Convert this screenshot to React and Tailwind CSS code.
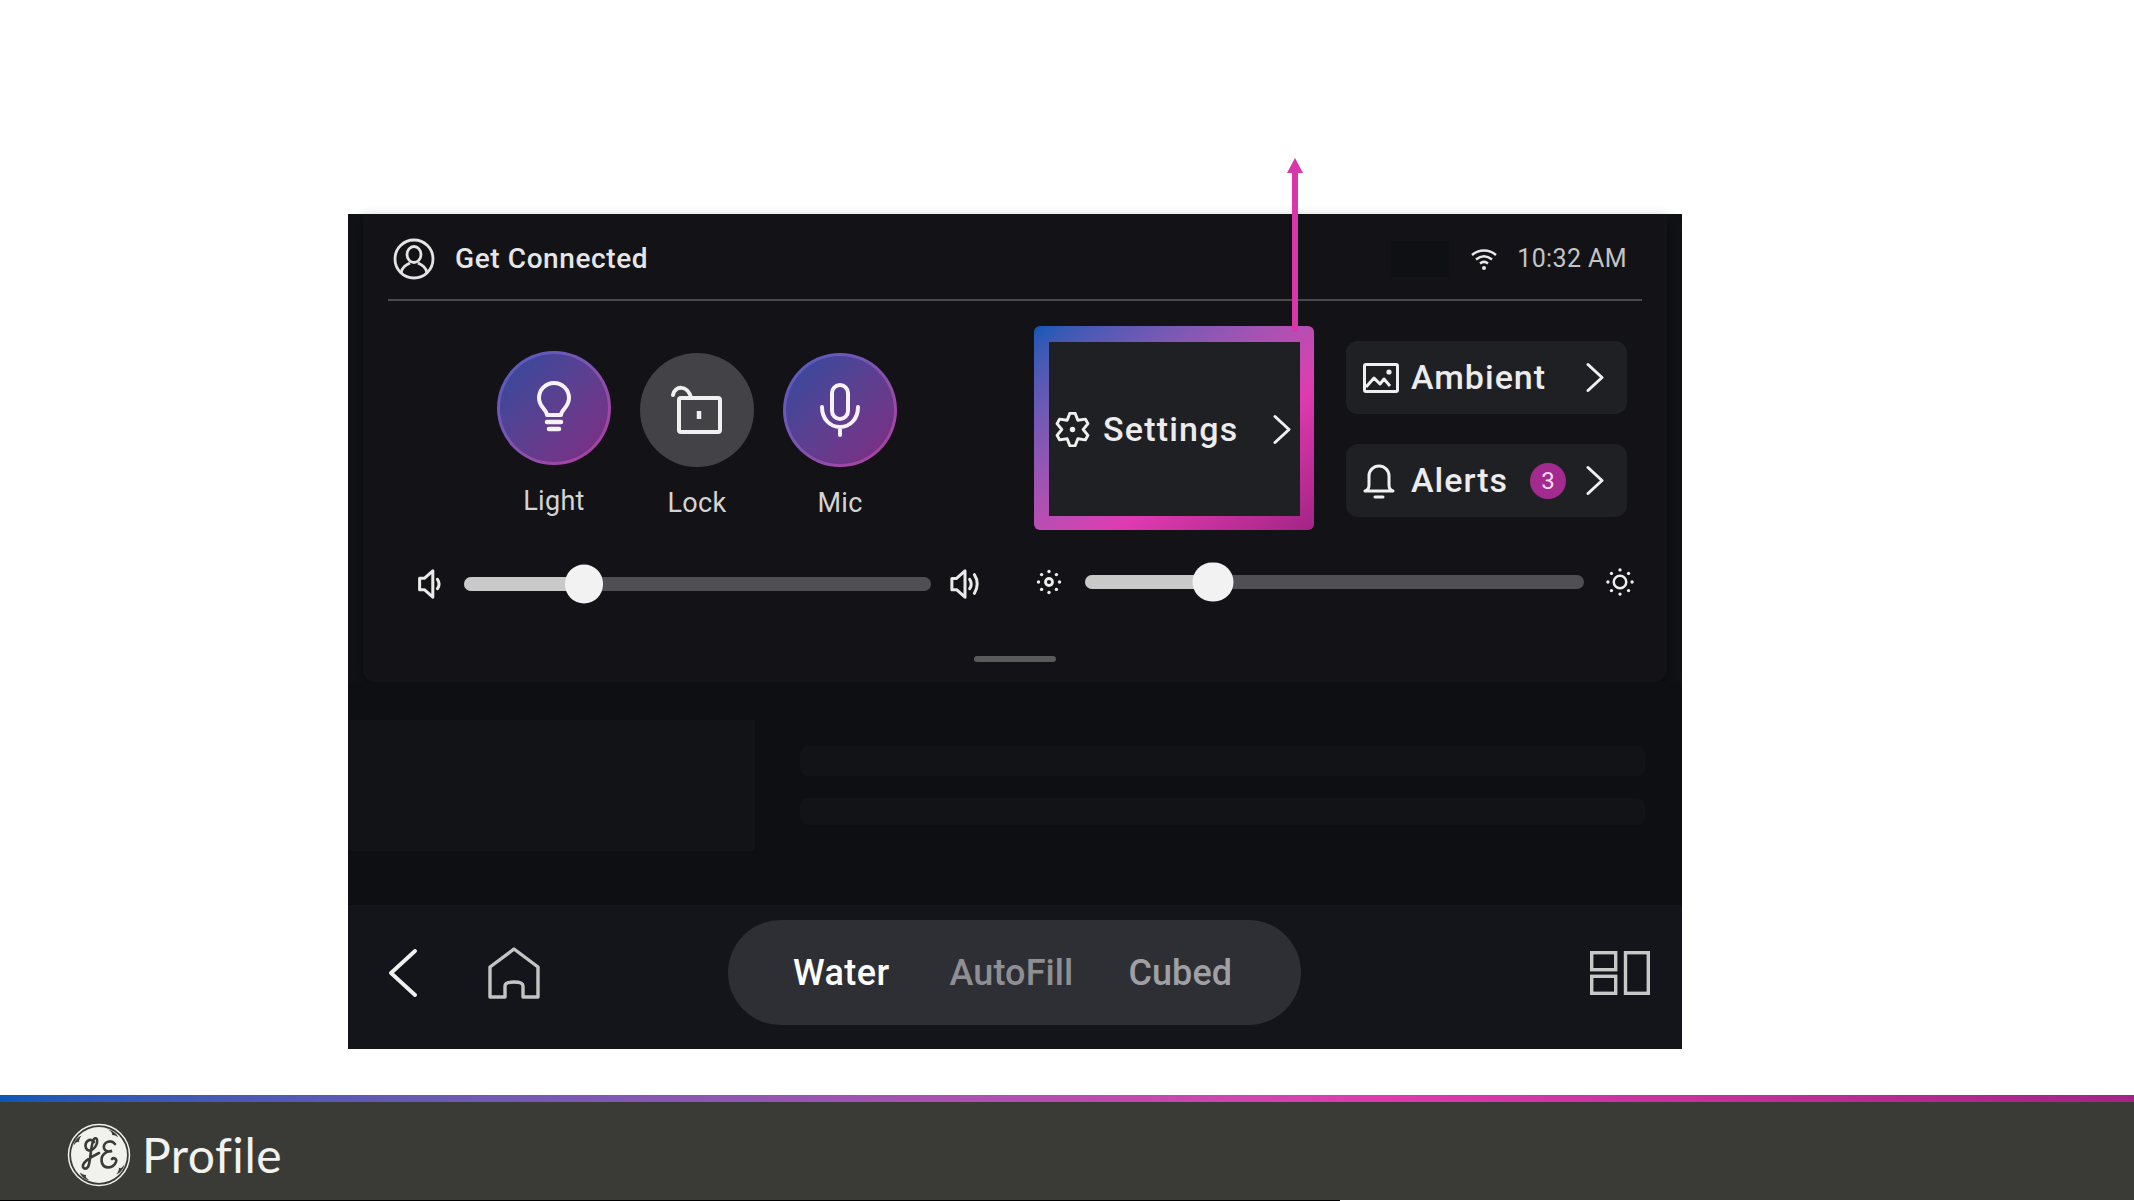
const font = "font-['Roboto',sans-serif]";

// six-tooth gear outline in a 36 box, each tooth has a small flat top
const gearPath = () => {
  const pts = [];
  for (let i = 0; i < 6; i++) {
    const a = (Math.PI / 3) * i - Math.PI / 2;
    [[-0.16, 17], [0.16, 17], [0.52, 11]].forEach(([d, r]) => {
      pts.push(`${(18 + r * Math.cos(a + d)).toFixed(1)} ${(18 + r * Math.sin(a + d)).toFixed(1)}`);
    });
  }
  return `M${pts.join(' L')} Z`;
};

const rays = (cx, cy, r) =>
  [0, 1, 2, 3, 4, 5, 6, 7].map((i) => {
    const a = (Math.PI / 4) * i;
    return { x: cx + r * Math.cos(a), y: cy + r * Math.sin(a) };
  });

function Avatar() {
  return (
    <svg width="42" height="42" viewBox="0 0 42 42" fill="none" stroke="#e4e4e4" strokeWidth="2.800">
      <circle cx="21" cy="21" r="19" />
      <ellipse cx="21" cy="16.500" rx="7" ry="8" />
      <path d="M8 35c1-6 5-8 9-10M34 35c-1-6-5-8-9-10" />
    </svg>
  );
}

function Wifi() {
  return (
    <svg width="28" height="24" viewBox="0 0 28 24" fill="none" stroke="#e8e8e8" strokeWidth="2.500">
      <path d="M2 8c7-6 17-6 24 0M6 12.500c5-4 11-4 16 0M10 16.500c2.500-2 5.500-2 8 0" />
      <circle cx="14" cy="21" r="2" fill="#e8e8e8" stroke="none" />
    </svg>
  );
}

function Bulb() {
  return (
    <svg width="36" height="54" viewBox="0 0 36 54" fill="none" stroke="#f6f2f8" strokeWidth="4" strokeLinecap="round" strokeLinejoin="round">
      <path d="M11 34c0-5-8-8-8-17a15 15 0 0 1 30 0c0 9-8 12-8 17z" />
      <path d="M11 41h14M13 48h10" strokeWidth="4.500" />
    </svg>
  );
}

function OpenLock() {
  return (
    <svg width="52" height="52" viewBox="0 0 52 52" fill="none" stroke="#f0f0f0" strokeWidth="4" strokeLinecap="round" strokeLinejoin="round">
      <rect x="8" y="14" width="41" height="34" rx="2" />
      <path d="M2 11c1-9 15-11 18 3" />
      <path d="M28 27v8" strokeWidth="4.500" strokeLinecap="butt" />
    </svg>
  );
}

function Mic() {
  return (
    <svg width="44" height="54" viewBox="0 0 44 54" fill="none" stroke="#f6f2f8" strokeWidth="4" strokeLinecap="round">
      <rect x="14" y="2" width="16" height="34" rx="8" />
      <path d="M4 24c0 12 8 20 18 20s18-8 18-20M22 44v8" />
    </svg>
  );
}

function Speaker({ loud }) {
  return (
    <svg width={loud ? 32 : 25} height="32" viewBox={loud ? '0 0 32 34' : '0 0 25 34'} fill="none" stroke="#eaeaea" strokeWidth="3.200" strokeLinejoin="round" strokeLinecap="round">
      <path d="M2 11h5l9-8v28l-9-8H2z" />
      <path d="M21 12c2 3 2 7 0 10" />
      {loud && <path d="M26 7c4 6 4 14 0 20" />}
    </svg>
  );
}

function SunSmall() {
  return (
    <svg width="28" height="28" viewBox="0 0 28 28" fill="none" stroke="#eeeeee" strokeWidth="2.800">
      <circle cx="14" cy="14" r="3.500" />
      {rays(14, 14, 10.500).map((p, i) => (
        <circle key={i} cx={p.x} cy={p.y} r="1.700" fill="#eeeeee" stroke="none" />
      ))}
    </svg>
  );
}

function SunBig() {
  return (
    <svg width="38" height="38" viewBox="0 0 36 36" fill="none" stroke="#eeeeee" strokeWidth="3">
      <circle cx="18" cy="18" r="7.500" />
      {rays(18, 18, 14.500).map((p, i) => (
        <circle key={i} cx={p.x} cy={p.y} r="2" fill="#eeeeee" stroke="none" />
      ))}
    </svg>
  );
}

function Gear() {
  return (
    <svg width="35" height="35" viewBox="0 0 36 36" fill="none" stroke="#f0f0f0" strokeWidth="3" strokeLinejoin="round">
      <path d={gearPath()} />
      <circle cx="18" cy="18" r="2.800" fill="#f0f0f0" stroke="none" />
    </svg>
  );
}

function Picture() {
  return (
    <svg width="36" height="30" viewBox="0 0 36 30" fill="none" stroke="#f0f0f0" strokeWidth="3" strokeLinejoin="round">
      <rect x="1.500" y="1.500" width="33" height="27" rx="1.500" />
      <path d="M3 24l8-9 6 6 4-5 6 7" />
      <circle cx="26" cy="9" r="2.600" fill="#f0f0f0" stroke="none" />
    </svg>
  );
}

function Bell() {
  return (
    <svg width="32" height="36" viewBox="0 0 32 36" fill="none" stroke="#f0f0f0" strokeWidth="3" strokeLinejoin="round" strokeLinecap="round">
      <path d="M2 28c3-1 4-3 4-6v-9a10 10 0 0 1 20 0v9c0 3 1 5 4 6z" />
      <path d="M12 34h8" />
    </svg>
  );
}

function Chevron() {
  return (
    <svg width="18" height="31" viewBox="0 0 18 30" fill="none" stroke="#f0f0f0" strokeWidth="3" strokeLinecap="round" strokeLinejoin="round">
      <path d="M2 2l14 13L2 28" />
    </svg>
  );
}

function Slider({ width, knob, knobSize = 'w-[38px]' }) {
  return (
    <div className="relative h-[14px] rounded-full bg-[#505054]" style={{ width }}>
      <div className="h-full rounded-full bg-[#c9c9c9]" style={{ width: knob }} />
      <div
        className={`absolute top-1/2 h-[39px] ${knobSize} -translate-x-1/2 -translate-y-1/2 rounded-full bg-[#f2f2f2]`}
        style={{ left: knob }}
      />
    </div>
  );
}

function RoundButton({ label, on, lift, children }) {
  return (
    <div className={`flex w-[114px] flex-col items-center ${lift ? '' : 'mt-[2px]'}`}>
      {on ? (
        <div className="h-[114px] w-[114px] rounded-full bg-gradient-to-br from-[#4a5cc4] to-[#b23a9c] p-[3px]">
          <div className="flex h-full w-full items-center justify-center rounded-full bg-gradient-to-br from-[#2b4a9e] to-[#7f2a82]">
            {children}
          </div>
        </div>
      ) : (
        <div className="flex h-[114px] w-[114px] items-center justify-center rounded-full bg-[#434347]">
          {children}
        </div>
      )}
      <span className={`${font} mt-[20px] text-[27px] leading-[32px] tracking-[0.3px] text-[#d4d4d4]`}>{label}</span>
    </div>
  );
}

function SideButton({ icon, label, badge }) {
  return (
    <div className="flex h-[73px] w-[281px] items-center rounded-xl bg-[#1f2024] pl-[17px] pr-[23px]">
      <div className="flex w-[48px] shrink-0 items-center">{icon}</div>
      <span className={`${font} text-[34px] font-medium tracking-[1px] text-[#ececec]`}>{label}</span>
      {badge && (
        <span className={`${font} ml-auto mr-[20px] flex h-[36px] w-[36px] items-center justify-center rounded-full bg-[#a32a8e] text-[24px] text-[#f5dcf0]`}>
          {badge}
        </span>
      )}
      <div className={badge ? '' : 'ml-auto'}>
        <Chevron />
      </div>
    </div>
  );
}

function GeLogo() {
  const curl = 'M32 5c5-1 10 1 12 4-3-1-5-1-7 0 1-2-1-3-5-4z';
  return (
    <svg width="64" height="64" viewBox="0 0 64 64" fill="none">
      <circle cx="32" cy="32" r="30.500" stroke="#f1f1ed" strokeWidth="1.500" />
      <circle cx="32" cy="32" r="28" fill="#f1f1ed" />
      {[20, 110, 200, 290].map((r) => (
        <path key={r} d={curl} fill="#3a3b36" transform={`rotate(${r} 32 32)`} />
      ))}
      <g stroke="#3a3b36" strokeWidth="2.600" strokeLinecap="round">
        <path d="M27 19c-4-5-10 0-8 6 2 5 9 2 11-5 1-4-1-6-3-4-3 4-3 17-5 25-1 6-7 6-6 1 1-4 8-8 16-12" />
        <path d="M48 21c-4-5-12-2-11 4 1 4 5 4 8 3-7 0-12 5-10 12 2 6 11 6 14-1 1-3-2-5-4-3" />
      </g>
    </svg>
  );
}

export default function App() {
  return (
    <div className="flex h-[1201px] w-[2134px] flex-col overflow-hidden bg-white">
      <main className="flex-1 pl-[348px] pt-[214px]">
        <div className="flex h-[835px] w-[1334px] flex-col bg-[#111216]">

          {/* Pull-down panel */}
          <section className="mx-[15px] flex h-[468px] flex-col rounded-b-xl bg-[#131317] px-[25px] shadow-[0_6px_14px_rgba(0,0,0,0.45)]">
            <header className="flex h-[87px] shrink-0 items-center border-b-2 border-[#4a4a4d] pl-[5px] pr-[15px] pt-[5px]">
              <Avatar />
              <span className={`${font} ml-[20px] text-[28px] font-medium tracking-[0.6px] text-[#e6e6e6]`}>Get Connected</span>
              <div className="ml-auto h-[36px] w-[58px] bg-[#0f1013]" />
              <div className="ml-[21px]"><Wifi /></div>
              <span className={`${font} ml-[19px] text-[25px] tracking-[0.4px] text-[#c4c4c4]`}>10:32 AM</span>
            </header>

            <div className="flex">
              {/* Quick toggles and volume */}
              <div className="mr-[28px] flex w-[618px] flex-col pt-[50px]">
                <div className="flex justify-center gap-[29px]">
                  <RoundButton label="Light" on lift><Bulb /></RoundButton>
                  <RoundButton label="Lock"><OpenLock /></RoundButton>
                  <RoundButton label="Mic" on><Mic /></RoundButton>
                </div>
                <div className="mt-[45px] flex h-[40px] items-center pl-[26px]">
                  <div className="mr-[20px] flex w-[30px] justify-center"><Speaker /></div>
                  <Slider width={467} knob={120} />
                  <div className="ml-[19px] flex w-[30px] justify-center"><Speaker loud /></div>
                </div>
              </div>

              {/* Settings, shortcuts and brightness */}
              <div className="flex flex-col pt-[25px]">
                <div className="flex items-start">
                  <div className="relative h-[204px] w-[280px] rounded-md bg-gradient-to-br from-[#0a58b5] via-[#e03ab0] via-65% to-[#a32484] pb-[14px] pl-[15px] pr-[14px] pt-[16px]">
                    {/* annotation arrow */}
                    <div className="absolute bottom-[198px] left-[253px] flex flex-col items-center">
                      <div className="h-0 w-0 border-x-[8px] border-b-[15px] border-x-transparent border-b-[#d936a9]" />
                      <div className="h-[159px] w-[6px] bg-[#d936a9]" />
                    </div>
                    <div className="flex h-full w-full items-center bg-[#1f2024] pl-[6px] pr-[9px]">
                      <Gear />
                      <span className={`${font} ml-[13px] text-[34px] font-medium tracking-[1.2px] text-[#ececec]`}>Settings</span>
                      <div className="ml-auto"><Chevron /></div>
                    </div>
                  </div>
                  <div className="ml-[32px] flex flex-col gap-[30px] pt-[15px]">
                    <SideButton icon={<Picture />} label="Ambient" />
                    <SideButton icon={<Bell />} label="Alerts" badge="3" />
                  </div>
                </div>
                <div className="mt-[32px] flex h-[40px] items-center">
                  <div className="mr-[21px] flex w-[30px] justify-center"><SunSmall /></div>
                  <Slider width={499} knob={128} knobSize="w-[41px]" />
                  <div className="ml-[21px] flex w-[30px] justify-center"><SunBig /></div>
                </div>
              </div>
            </div>

            <div className="mx-auto mt-[52px] h-[6px] w-[82px] rounded-full bg-[#5a5a5d]" />
          </section>

          {/* Dimmed content under the panel */}
          <section className="flex flex-1 items-start bg-[#0e0f12] pt-[38px]">
            <div className="h-[131px] w-[407px] bg-[#121317]" />
            <div className="ml-[45px] flex w-[845px] flex-col gap-[22px] pt-[26px]">
              <div className="h-[30px] rounded-lg bg-[#121317]" />
              <div className="h-[27px] rounded-lg bg-[#121317]" />
            </div>
          </section>

          {/* Bottom bar */}
          <nav className="flex h-[144px] shrink-0 items-center bg-[#14151a] pb-[9px] pl-[41px] pr-[32px]">
            <svg width="28" height="48" viewBox="0 0 28 48" fill="none" stroke="#f0f0f0" strokeWidth="3.800" strokeLinecap="round" strokeLinejoin="round">
              <path d="M26 2L2 24l24 22" />
            </svg>
            <svg className="ml-[71px]" width="52" height="52" viewBox="0 0 52 52" fill="none" stroke="#c4c4c4" strokeWidth="3.400" strokeLinejoin="round">
              <path d="M2 50V20L26 2l24 18v30H35V39c0-3-3-4-9-4s-9 1-9 4v11z" />
            </svg>
            <div className={`${font} ml-[188px] flex h-[105px] w-[573px] items-center rounded-full bg-[#2e2f34] pl-[65px] text-[36px] font-medium tracking-[0.4px]`}>
              <span className="text-white">Water</span>
              <span className="ml-[60px] tracking-[0.1px] text-[#8f8f93]">AutoFill</span>
              <span className="ml-[55px] tracking-[0.1px] text-[#a0a0a4]">Cubed</span>
            </div>
            <svg className="ml-auto" width="60" height="44" viewBox="0 0 60 44" fill="none" stroke="#c8c8c8" strokeWidth="3.400">
              <rect x="1.700" y="1.700" width="24" height="17" />
              <rect x="1.700" y="25.300" width="24" height="17" />
              <rect x="35.500" y="1.700" width="22.800" height="40.600" />
            </svg>
          </nav>
        </div>
      </main>

      {/* Brand footer */}
      <footer className="shrink-0">
        <div className="h-[7px] bg-gradient-to-r from-[#0a58b5] via-[#e03ab0] via-65% to-[#a32484]" />
        <div className="flex h-[98px] items-center bg-[#3a3b36] pl-[67px] pt-[7px]">
          <GeLogo />
          <span className="ml-[11px] font-['Lato',sans-serif] text-[48px] tracking-[0.5px] text-[#f2f2ee]">Profile</span>
        </div>
        <div className="h-px w-[1340px] bg-black" />
      </footer>
    </div>
  );
}
